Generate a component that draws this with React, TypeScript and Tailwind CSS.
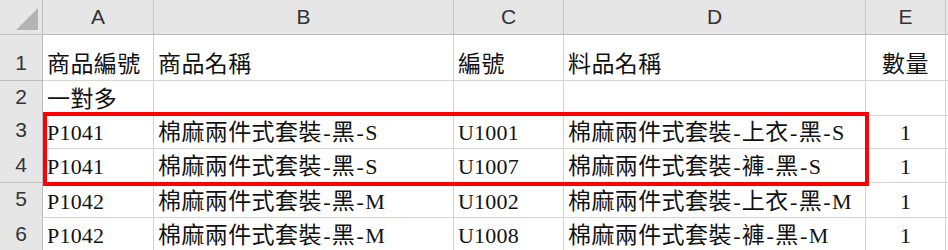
import React from 'react';

const cols = ['A', 'B', 'C', 'D', 'E'];
const colW = 'grid-cols-[43px_111px_300px_110px_302px_80px_1fr]';

type Row = { n: number; h: string; cells: string[] };

const rows: Row[] = [
  { n: 1, h: 'h-[46px]', cells: ['商品編號', '商品名稱', '編號', '料品名稱', '數量'] },
  { n: 2, h: 'h-[33px]', cells: ['一對多', '', '', '', ''] },
  { n: 3, h: 'h-[34px]', cells: ['P1041', '棉麻兩件式套裝-黑-S', 'U1001', '棉麻兩件式套裝-上衣-黑-S', '1'] },
  { n: 4, h: 'h-[35px]', cells: ['P1041', '棉麻兩件式套裝-黑-S', 'U1007', '棉麻兩件式套裝-褲-黑-S', '1'] },
  { n: 5, h: 'h-[33px]', cells: ['P1042', '棉麻兩件式套裝-黑-M', 'U1002', '棉麻兩件式套裝-上衣-黑-M', '1'] },
  { n: 6, h: 'h-[36px]', cells: ['P1042', '棉麻兩件式套裝-黑-M', 'U1008', '棉麻兩件式套裝-褲-黑-M', '1'] },
];

const cellFont = "font-['Liberation_Serif','Noto_Sans_CJK_TC',serif]";
const headFont = "font-['Liberation_Sans',sans-serif]";

// split cell text into runs so CJK, hyphens and latin can be sized like the sheet's MingLiU
function Runs({ text }: { text: string }) {
  const parts: { kind: 'cjk' | 'dash' | 'lat'; s: string }[] = [];
  for (const ch of text) {
    const kind = ch === '-' ? 'dash' : /[\u3000-\u9fff]/.test(ch) ? 'cjk' : 'lat';
    const last = parts[parts.length - 1];
    if (last && last.kind === kind && kind !== 'dash') last.s += ch;
    else parts.push({ kind, s: ch });
  }
  return (
    <>
      {parts.map((p, i) =>
        p.kind === 'cjk' ? (
          <span key={i} className="text-[23px] tracking-[0.4px]">{p.s}</span>
        ) : p.kind === 'dash' ? (
          <span key={i} className="inline-block w-[10px] text-center">-</span>
        ) : (
          <span key={i} className="tracking-[0.2px]">{p.s}</span>
        )
      )}
    </>
  );
}

export default function App() {
  return (
    <div className="relative w-[948px] h-[250px] overflow-hidden bg-white">
      {/* column headers */}
      <div className={`grid ${colW} h-[35px] bg-[#e6e6e6] border-b border-[#bdbdbd]`}>
        <div className="border-r border-[#bdbdbd] relative">
          <svg width="42" height="34" className="absolute left-0 top-0">
            <polygon points="16,30 38,30 38,8" fill="#b4b4b4" />
          </svg>
        </div>
        {cols.map(c => (
          <div key={c} className={`border-r border-[#c8c8c8] flex items-center justify-center text-[21px] text-[#333] ${headFont}`}>
            {c}
          </div>
        ))}
        <div />
      </div>

      {rows.map(r => (
        <div key={r.n} className={`grid ${colW} ${r.h}`}>
          <div className={`bg-[#e6e6e6] border-r border-b border-[#bdbdbd] flex items-end justify-center pb-[2px] text-[21px] text-[#333] ${headFont}`}>
            {r.n}
          </div>
          {r.cells.map((t, i) => (
            <div
              key={i}
              className={`border-r border-b border-[#d4d4d4] flex items-end text-[22px] leading-[30px] text-[#111] whitespace-nowrap overflow-visible ${cellFont} ${i === 4 ? 'justify-center' : 'pl-[4px]'}`}
            >
              <span>
                <Runs text={t} />
              </span>
            </div>
          ))}
          <div className="border-b border-[#d4d4d4]" />
        </div>
      ))}

      {/* selection outline */}
      <div className="absolute left-[43px] top-[112px] w-[826px] h-[74px] border-4 border-[#ff0000] pointer-events-none" />
    </div>
  );
}
